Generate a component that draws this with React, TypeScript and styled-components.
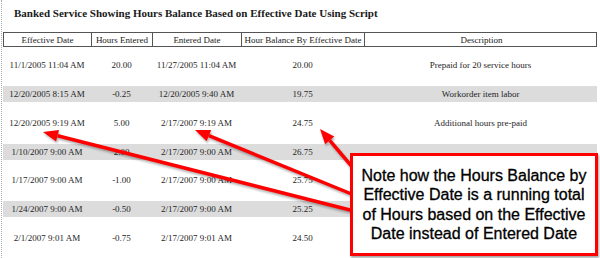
import styled, { createGlobalStyle } from "styled-components";

const GlobalStyle = createGlobalStyle`
  html, body {
    margin: 0;
    padding: 0;
    background: #ffffff;
  }
`;

// column widths of the report table
const columns = "88px 61px 89px 123px 233px";

const rows = [
  ["11/1/2005 11:04 AM", "20.00", "11/27/2005 11:04 AM", "20.00", "Prepaid for 20 service hours"],
  ["12/20/2005 8:15 AM", "-0.25", "12/20/2005 9:40 AM", "19.75", "Workorder item labor"],
  ["12/20/2005 9:19 AM", "5.00", "2/17/2007 9:19 AM", "24.75", "Additional hours pre-paid"],
  ["1/10/2007 9:00 AM", "2.00", "2/17/2007 9:00 AM", "26.75", ""],
  ["1/17/2007 9:00 AM", "-1.00", "2/17/2007 9:00 AM", "25.75", ""],
  ["1/24/2007 9:00 AM", "-0.50", "2/17/2007 9:00 AM", "25.25", ""],
  ["2/1/2007 9:01 AM", "-0.75", "2/17/2007 9:01 AM", "24.50", ""],
];

const headers = [
  "Effective Date",
  "Hours Entered",
  "Entered Date",
  "Hour Balance By Effective Date",
  "Description",
];

const Page = styled.div`
  position: relative;
  width: 600px;
  height: 258px;
  overflow: hidden;
  box-sizing: border-box;
  margin-left: 1px;
  border-left: 1px dotted #a8a8a8;
  font-family: "Liberation Serif", "Times New Roman", serif;
  color: #222;
`;

const Title = styled.h1`
  margin: 0;
  padding: 6px 0 0 12px;
  height: 25px;
  box-sizing: border-box;
  font-size: 11px;
  line-height: 14px;
  font-weight: bold;
  color: #1a1a1a;
`;

const Report = styled.div`
  margin-left: 1px;
  width: 594px;
`;

const HeaderRow = styled.div`
  display: grid;
  grid-template-columns: ${columns};
  height: 15px;
  border: 1px solid #555;
  box-sizing: border-box;
  margin-top: 7px;
`;

const HeaderCell = styled.div<{ $last?: boolean }>`
  display: flex;
  align-items: center;
  justify-content: center;
  font-size: 9px;
  white-space: nowrap;
  border-right: ${(p) => (p.$last ? "none" : "1px solid #555")};
`;

const Body = styled.div`
  display: flex;
  flex-direction: column;
  gap: 12.75px;
  padding-top: 10.25px;
`;

const Row = styled.div<{ $shaded: boolean }>`
  display: grid;
  grid-template-columns: ${columns};
  height: 16px;
  background: ${(p) => (p.$shaded ? "#dcdcdc" : "transparent")};
`;

const Cell = styled.div`
  display: flex;
  align-items: center;
  justify-content: center;
  font-size: 9px;
  white-space: nowrap;
  color: #1e1e1e;
`;

const Note = styled.div`
  position: absolute;
  left: 348px;
  top: 153px;
  width: 248px;
  height: 103px;
  box-sizing: border-box;
  border: 3px solid #ff0000;
  background: #ffffff;
  display: flex;
  align-items: center;
  justify-content: center;
  text-align: center;
  font-family: "Liberation Sans", Arial, sans-serif;
  font-size: 16px;
  line-height: 19.5px;
  color: #000;
  -webkit-text-stroke: 0.3px #000;
  box-shadow: 1px 2px 2px rgba(0, 0, 0, 0.35);
`;

const Arrows = styled.svg`
  position: absolute;
  left: 0;
  top: 0;
  width: 600px;
  height: 258px;
  pointer-events: none;
  filter: drop-shadow(1px 2px 1px rgba(0, 0, 0, 0.3));
`;

type Arrow = { x1: number; y1: number; x2: number; y2: number };

const arrows: Arrow[] = [
  { x1: 352, y1: 169, x2: 318, y2: 129 },
  { x1: 352, y1: 195, x2: 193, y2: 130 },
  { x1: 352, y1: 211, x2: 41, y2: 132 },
];

function ArrowShape({ x1, y1, x2, y2 }: Arrow) {
  const angle = Math.atan2(y2 - y1, x2 - x1);
  const len = 15;
  const half = 6;
  const bx = x2 - Math.cos(angle) * len;
  const by = y2 - Math.sin(angle) * len;
  const px = -Math.sin(angle) * half;
  const py = Math.cos(angle) * half;
  return (
    <g>
      <line x1={x1} y1={y1} x2={bx} y2={by} stroke="#ff0000" strokeWidth={3.5} />
      <polygon
        points={`${x2},${y2} ${bx + px},${by + py} ${bx - px},${by - py}`}
        fill="#ff0000"
      />
    </g>
  );
}

export default function App() {
  return (
    <>
      <GlobalStyle />
      <Page>
        <Title>Banked Service Showing Hours Balance Based on Effective Date Using Script</Title>
        <Report>
          <HeaderRow>
            {headers.map((h, i) => (
              <HeaderCell key={h} $last={i === headers.length - 1}>
                {h}
              </HeaderCell>
            ))}
          </HeaderRow>
          <Body>
            {rows.map((r, i) => (
              <Row key={i} $shaded={i % 2 === 1}>
                {r.map((c, j) => (
                  <Cell key={j}>{c}</Cell>
                ))}
              </Row>
            ))}
          </Body>
        </Report>
        <Arrows viewBox="0 0 600 258">
          {arrows.map((a, i) => (
            <ArrowShape key={i} {...a} />
          ))}
        </Arrows>
        <Note>
          Note how the Hours Balance by
          <br />
          Effective Date is a running total
          <br />
          of Hours based on the Effective
          <br />
          Date instead of Entered Date
        </Note>
      </Page>
    </>
  );
}
